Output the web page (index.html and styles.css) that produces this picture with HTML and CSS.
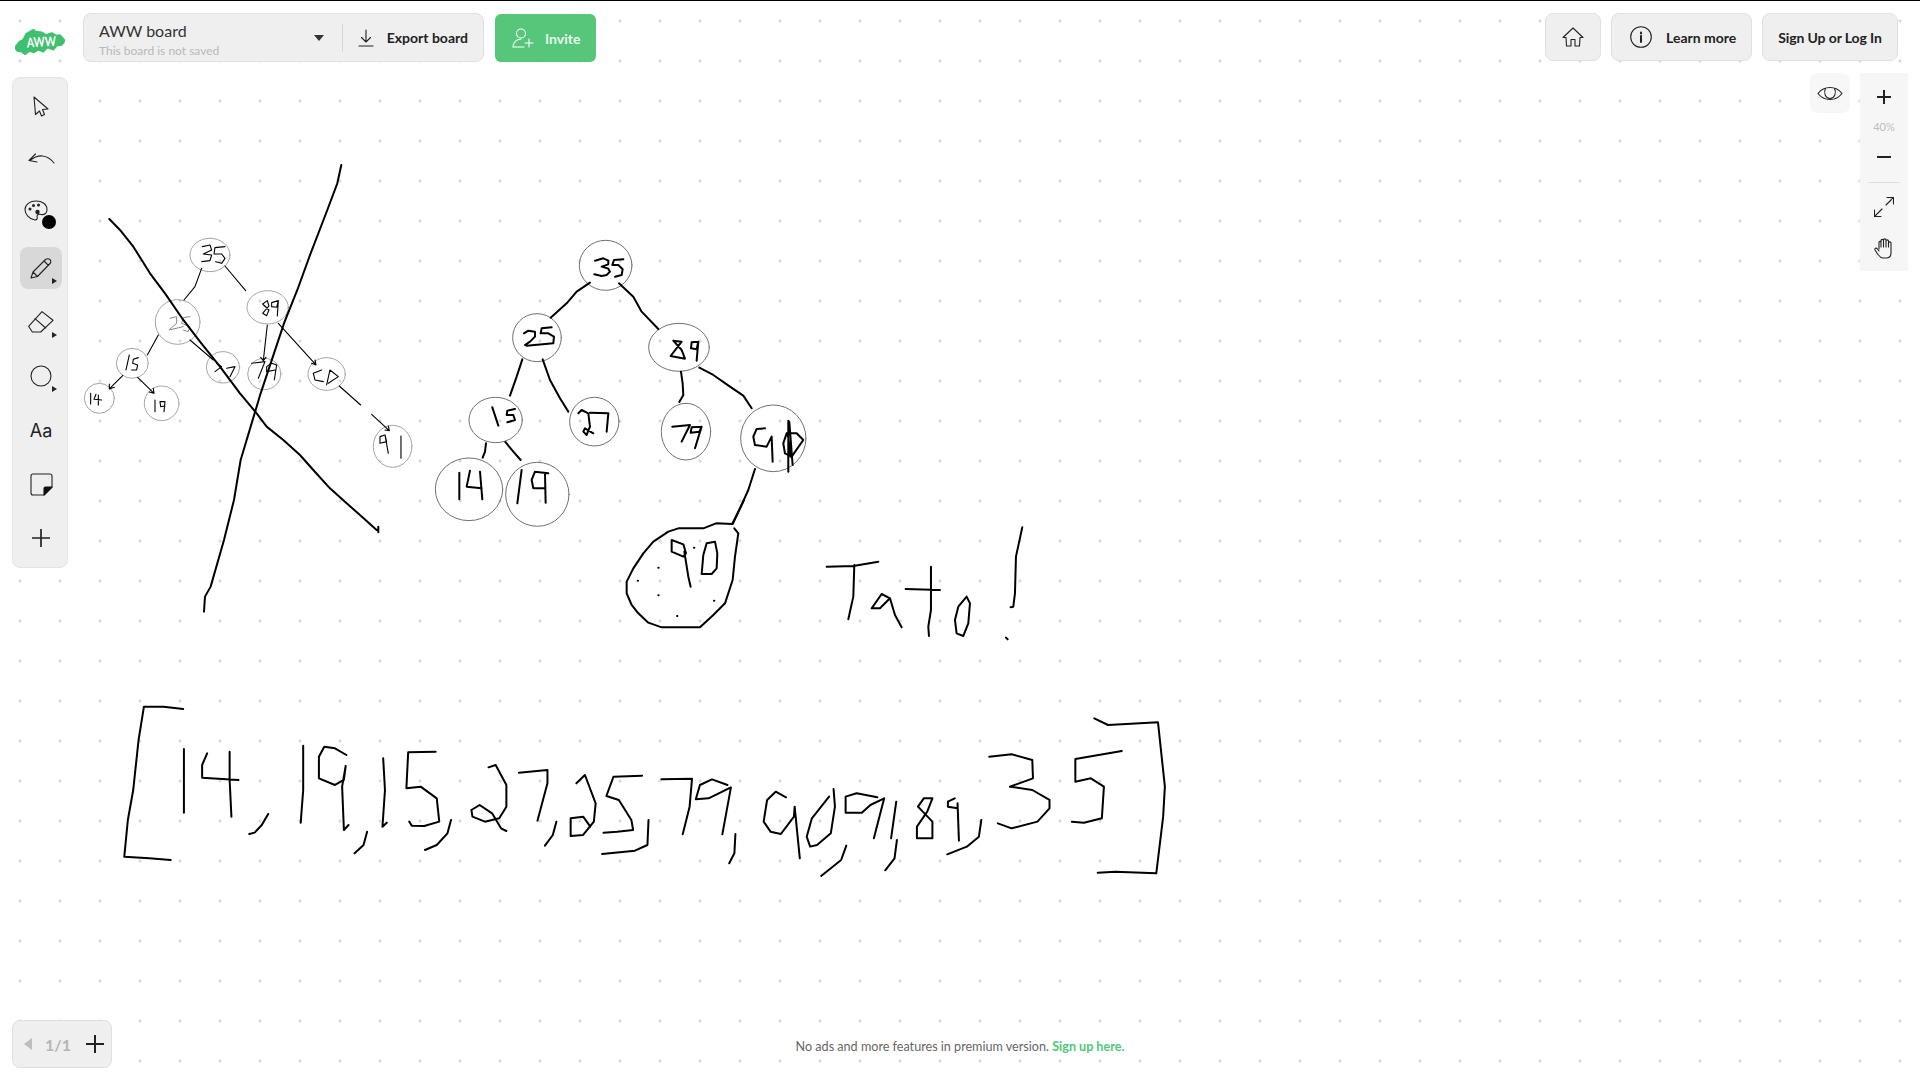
FILE: index.html
```html
<!DOCTYPE html>
<html lang="en">
<head>
    <meta charset="UTF-8">
    <meta name="viewport" content="width=device-width, initial-scale=1.0">
    <title>AWW board</title>
    <link rel="stylesheet" href="styles.css">
</head>
<body>
    <div class="board">
        <!-- Free canvas: everything the user drew -->
        <svg class="ink" viewBox="0 0 1920 1080" width="1920" height="1080">
            <!-- small tree -->
            <g transform="translate(70 150) scale(.3333)">
                <g class="ring-light">
                    <ellipse cx="420" cy="315" rx="60" ry="50"/>
                    <ellipse cx="323" cy="516" rx="67" ry="67"/>
                    <ellipse cx="593" cy="472" rx="62" ry="50"/>
                    <ellipse cx="187" cy="640" rx="48" ry="45"/>
                    <ellipse cx="459" cy="652" rx="50" ry="47"/>
                    <ellipse cx="583" cy="672" rx="50" ry="47"/>
                    <ellipse cx="770" cy="672" rx="56" ry="49"/>
                    <ellipse cx="88" cy="745" rx="45" ry="45"/>
                    <ellipse cx="275" cy="760" rx="52" ry="52"/>
                    <ellipse cx="968" cy="889" rx="58" ry="63"/>
                </g>
                <g class="pen-thin">
                    <path d="M395 355L375 410L342 450M465 348L527 422M265 555L232 615"/>
                    <path d="M158 677L118 717M118 702L118 717L133 712M203 682L252 730M238 726L252 730L250 715"/>
                    <path d="M360 570L430 630M592 525L580 632M572 622L580 632L588 622M625 520L738 645M725 640L738 645L735 630"/>
                    <path d="M808 708L872 765M905 793L958 842M945 840L958 842L955 828"/>
                    <path d="M397 290L420 285L425 300L400 312L425 315L420 332L395 335M465 290L435 293L432 312L455 312L465 325L455 340L437 335"/>
                    <path d="M578 462L592 452L597 468L578 490L590 497L597 480L578 462M625 452L605 458L605 470L620 472L625 452L622 498"/>
                    <path d="M178 615L168 660M205 623L190 628L188 640L203 645L200 660L185 660"/>
                    <path d="M62 730L62 762M78 733L72 748L95 750M85 735L85 765"/>
                    <path d="M255 750L255 785M285 755L270 755L272 770L285 768M285 755L282 785"/>
                    <path d="M440 640L455 650L435 665M470 655L495 650L480 680"/>
                    <path d="M545 640L585 635L565 685M620 645L605 640L590 650L590 665L615 660M620 645L613 690"/>
                    <path d="M755 660L730 670L735 690L760 695M770 705L780 660L805 680L775 700"/>
                    <path d="M945 855L930 860L930 880L950 875L945 855L955 910M993 858L993 925"/>
                </g>
                <path class="pen-faded" d="M300 505L320 500L320 520L297 540L340 530M360 500L340 503L335 520L360 530L355 545L340 540"/>
                <g class="pen-bold">
                    <path d="M118 207L150 240L190 290L240 370L285 430L340 510L390 575L450 650L510 730L560 790L590 830L640 870L690 915L730 960L780 1015L830 1060L870 1095L920 1140M925 1130L925 1147"/>
                    <path d="M814 45L802 100L772 180L722 310L682 420L642 520L612 610L572 730L542 830L512 930L492 1050L462 1170L422 1310L405 1340L402 1385"/>
                </g>
            </g>
            <!-- big tree -->
            <g transform="translate(420 230) scale(.3333)">
                <g class="ring-dark">
                    <ellipse cx="557" cy="106" rx="79" ry="75"/>
                    <ellipse cx="351" cy="323" rx="73" ry="72"/>
                    <ellipse cx="777" cy="352" rx="91" ry="72"/>
                    <ellipse cx="227" cy="570" rx="80" ry="68"/>
                    <ellipse cx="523" cy="575" rx="74" ry="73"/>
                    <ellipse cx="798" cy="605" rx="74" ry="85"/>
                    <ellipse cx="1060" cy="625" rx="98" ry="100"/>
                    <ellipse cx="147" cy="778" rx="101" ry="94"/>
                    <ellipse cx="352" cy="793" rx="95" ry="96"/>
                </g>
                <g class="pen">
                    <path d="M510 158L470 185L440 220L392 263M597 160L640 200L665 245L715 297M307 388L290 440L270 497M368 388L390 450L420 505L445 545"/>
                    <path d="M783 425L788 460L790 495L778 516M838 413L880 435L930 470L970 497L995 535M198 640L195 665L188 683M256 636L280 665L302 690"/>
                    <path d="M1005 717L985 780L960 835L938 880"/>
                    <path d="M525 92L550 85L565 92L565 103L545 110L565 116L570 125L560 135L545 138L523 133M610 88L582 90L577 105L595 105L608 118L605 135L585 140"/>
                    <path d="M312 310L325 302L345 305L345 320L330 335L315 345L320 347L400 340M395 292L365 295L362 310L385 310L402 320L400 340"/>
                    <path d="M760 332L785 335L752 378L795 386L785 360L760 332M835 335L815 337L813 355L830 358L835 335L830 392"/>
                    <path d="M217 532L235 587M285 537L262 542L260 555L280 555L285 570L262 577"/>
                    <path d="M475 550L485 540L505 550L510 590L500 615L490 605L495 595L520 610M510 548L565 550L560 605"/>
                    <path d="M757 590L810 585L785 635M845 590L815 592L812 608L838 605L845 590L825 655"/>
                    <path d="M1035 595L1010 597L1000 620L1005 645L1040 650L1055 620L1058 695M1100 610L1130 610L1150 630L1115 680L1095 670L1090 640L1100 610"/>
                    <path d="M1105 572L1105 725M1108 575L1118 705M1103 610L1112 680"/>
                    <path d="M118 728L118 808M150 722L140 770L185 775M180 725L187 808M305 720L292 820M385 730L345 725L335 750L340 775L375 775M375 730L377 818"/>
                </g>
            </g>
            <!-- highlighted 90 and the word next to it -->
            <g class="pen" transform="translate(600 500) scale(.3333)">
                <path d="M432 0L398 72L348 70L310 85L235 85L205 95L160 125L130 160L100 205L80 245L80 280L95 315L115 340L145 368L185 382L300 382L340 345L375 310L398 240L405 170L415 100L403 85"/>
                <path d="M215 120L250 133L258 160L250 170L215 155L215 120M253 155L265 230L272 260M310 165L320 130L345 125L352 160L350 205L335 222L305 222L310 165"/>
                <path class="speck" d="M282 143h1M175 203h1M113 242h1M175 286h1M342 302h1M231 348h1"/>
                <path d="M680 200L760 198L835 185M763 195L760 290L745 358M870 295L845 282L815 325L840 325L870 295L885 345L905 382"/>
                <path d="M917 267L1020 270M993 200L993 330L985 380L987 408M1100 290L1075 320L1065 360L1070 400L1090 408L1105 370L1110 310L1100 290"/>
                <path d="M1267 82L1248 170L1245 280L1240 320L1232 322M1218 413L1223 418"/>
            </g>
            <!-- the array, left half -->
            <g class="pen" transform="translate(110 690) scale(.3571 .3333)">
                <path d="M205 57L150 50L95 50L80 150L65 300L50 390L40 500L110 505L170 510"/>
                <path d="M207 177L207 368M272 190L258 225L258 263L360 270M335 185L335 270L340 380M443 372L425 405L405 428L390 432"/>
                <path d="M541 167L541 300L534 398M662 195L630 175L600 170L585 200L585 265L630 285L655 270L660 228L650 290L655 420L668 405M720 425L710 465L685 490"/>
                <path d="M765 205L770 300L763 410L775 398M912 185L835 187L830 295L870 290L915 325L922 395L880 408L845 407L838 395M955 390L945 430L915 465L882 480"/>
                <path d="M1060 232L1080 225L1110 285L1110 350L1090 385L1050 395L1015 380L1012 360L1035 345L1070 370L1095 415L1110 423M1145 248L1225 240L1225 280L1197 392M1250 395L1240 435L1218 467"/>
                <path d="M1306 280L1330 255L1360 340L1355 395L1325 435L1290 438L1290 385L1325 380L1345 410M1490 257L1410 260L1390 318L1425 330L1460 390L1465 420L1420 425L1382 428M1508 390L1505 465L1470 482L1378 492"/>
            </g>
            <!-- the array, right half -->
            <g class="pen" transform="translate(650 690) scale(.3444 .3333)">
                <path d="M33 268L122 266L115 350L95 433M225 285L180 268L145 285L133 328L170 325L235 292L210 433M248 432L245 490L230 520"/>
                <path d="M395 322L365 305L340 330L330 395L350 425L380 432L418 380L420 350L435 505M520 320L470 385L455 440L465 470L485 465L525 430L537 350L533 297M570 467L555 510L497 558"/>
                <path d="M660 322L600 310L568 320L568 368L615 368L640 345L680 325L650 445M715 335L700 445M717 450L710 505L683 541"/>
                <path d="M820 325L795 325L778 350L820 395L820 445L775 445L775 410L805 365L820 325M885 325L865 335L865 350L893 355L893 340L897 452M962 390L955 440L920 470L863 493"/>
                <path d="M985 200L1050 193L1110 210L1112 265L1045 290L1110 300L1160 330L1160 355L1125 395L1050 415L1010 400M1370 183L1235 207L1235 275L1280 265L1318 290L1312 385L1260 398L1225 395"/>
                <path d="M1290 85L1330 105L1475 97L1495 290L1490 380L1470 550L1350 545L1300 548"/>
            </g>
        </svg>

        <header class="top-bar">
            <div class="top-left">
                <svg class="logo" viewBox="15 24 150 84" width="50" height="28">
                    <path class="logo-blob" d="M15 85L28 68L40 62L48 45L70 32L78 38L95 40L108 48L125 42L140 50L150 48L165 65L155 78L140 80L130 92L112 85L100 98L85 92L72 100L58 96L45 106L35 98L22 96Z"/>
                    <text class="logo-text" x="50" y="83" textLength="88" lengthAdjust="spacingAndGlyphs" transform="rotate(-3 94 70)">AWW</text>
                </svg>
                <div class="board-panel">
                    <div class="board-name">
                        <div class="board-title">AWW board</div>
                        <div class="board-note">This board is not saved</div>
                    </div>
                    <span class="caret"></span>
                    <div class="export-btn">
                        <svg class="ico" viewBox="0 0 16 18" width="16" height="18"><path d="M8 1V13M3.500 8.500L8 13L12.500 8.500M1 17H15"/></svg>
                        <span>Export board</span>
                    </div>
                </div>
                <div class="invite-btn">
                    <svg class="ico ico-white" viewBox="0 0 22 20" width="22" height="20"><circle cx="9" cy="5.500" r="4.500"/><path d="M1 19C1.500 14 4 11.500 9 11M1 19H12M17 11V19M13 15H21"/></svg>
                    <span>Invite</span>
                </div>
            </div>
            <div class="top-right">
                <div class="top-btn home-btn">
                    <svg class="ico" viewBox="0 0 22 20" width="22" height="20"><path d="M11 1L21 10.500L18 10.500L17.500 19H13V12.500H9V19H4.500L4 10.500L1 10.500Z"/></svg>
                </div>
                <div class="top-btn learn-btn">
                    <svg class="ico" viewBox="0 0 22 22" width="22" height="22"><circle cx="11" cy="11" r="10.300"/><path class="ico-fat" d="M11 10V16M11 6.500V7.500"/></svg>
                    <span>Learn more</span>
                </div>
                <div class="top-btn sign-btn">Sign Up or Log In</div>
            </div>
        </header>

        <nav class="tools">
            <div class="tool">
                <svg class="ico" viewBox="0 0 16 21" width="16" height="21"><path d="M1 1L15 13L9.500 13.500L11.500 18.500L8.500 20L6.500 15L2.500 18.500Z"/></svg>
            </div>
            <div class="tool tool-undo">
                <svg class="ico" viewBox="0 0 28 11" width="28" height="11"><path d="M27 10C20 1 11 1 3 7.500M8.500 1L2 7.500L10 9"/></svg>
            </div>
            <div class="tool">
                <svg class="ico palette" viewBox="0 0 24 21" width="24" height="21"><path d="M12 1C6 1 1 4.500 1 9.500C1 14 5 19 11 20C13.500 20 13.500 18 13 16.500C13 14 15 14 17 14.500C21 15 23 13 23 9.500C23 4 18 1 12 1Z"/><circle class="ico-fill" cx="6" cy="9" r="1.500"/><circle class="ico-fill" cx="9.500" cy="5.500" r="1.500"/><circle class="ico-fill" cx="14.500" cy="5" r="1.500"/><circle class="ico-fill" cx="13.500" cy="12" r="2.200"/></svg>
                <span class="color-dot"></span>
            </div>
            <div class="tool active">
                <svg class="ico" viewBox="0 0 22 21" width="22" height="21"><path d="M1 20L3 14L15.500 1.500C17 0.500 18.500 0.500 20 1.500C21 3 21 4.500 20 5.500L7.500 18.500ZM3 14L7.500 18.500M14 3L18.500 7.500"/></svg>
                <span class="more"></span>
            </div>
            <div class="tool">
                <svg class="ico" viewBox="0 0 26 22" width="26" height="22"><path d="M14 0.600L25 9.300L12.700 21L4.300 21L0.600 15.300ZM7 7.700L17.700 17"/></svg>
                <span class="more"></span>
            </div>
            <div class="tool">
                <svg class="ico" viewBox="0 0 22 22" width="22" height="22"><circle cx="11" cy="11" r="10"/></svg>
                <span class="more"></span>
            </div>
            <div class="tool tool-text">Aa</div>
            <div class="tool">
                <svg class="ico" viewBox="0 0 23 23" width="23" height="23"><path d="M3 1H20C21.500 1 22 1.500 22 3V14L14 22H3C1.500 22 1 21.500 1 20V3C1 1.500 1.500 1 3 1Z"/><path class="ico-solid" d="M14 22V15.500C14 14.500 14.500 14 15.500 14H22Z"/></svg>
            </div>
            <div class="tool">
                <svg class="ico ico-plus" viewBox="0 0 18 18" width="18" height="18"><path d="M9 0V18M0 9H18"/></svg>
            </div>
        </nav>

        <div class="view-eye">
            <svg class="ico" viewBox="0 0 26 15" width="26" height="15"><path d="M1 7.500C7 -0.500 19 -0.500 25 7.500C19 15.500 7 15.500 1 7.500Z"/><path d="M8.500 2.500C6.500 6 8 12.500 13 12.500C18 12.500 19.500 6 17.500 2.500"/></svg>
        </div>

        <aside class="view-tools">
            <svg class="ico ico-fat" viewBox="0 0 14 14" width="14" height="14"><path d="M7 0V14M0 7H14"/></svg>
            <div class="zoom-value">40%</div>
            <svg class="ico ico-fat minus" viewBox="0 0 14 2" width="14" height="2"><path d="M0 1H14"/></svg>
            <div class="view-divider"></div>
            <svg class="ico expand" viewBox="0 0 20 20" width="20" height="20"><path d="M12 8L19.500 0.500M13 0.500H19.500V7M8 12L0.500 19.500M0.500 13V19.500H7"/></svg>
            <svg class="ico hand" viewBox="0 0 20 21" width="20" height="21"><path d="M5 11V4.500C5 3 7 3 7 4.500V9M7 9V2.500C7 1 9.500 1 9.500 2.500V9M9.500 9V2C9.500 0.500 12 0.500 12 2V9M12 9V3C12 1.500 14.500 1.500 14.500 3V9M14.500 9V5C14.500 3.500 17 3.500 17 5V15C17 18 15 20 12 20H9C6.500 20 5.500 18.500 4 16.500L1 12C0.500 10.500 2 9.500 3 10.500L5 13"/></svg>
        </aside>

        <div class="pager">
            <span class="pager-prev"></span>
            <span class="pager-count">1/1</span>
            <svg class="ico ico-fat" viewBox="0 0 18 18" width="18" height="18"><path d="M9 0V18M0 9H18"/></svg>
        </div>

        <p class="promo">No ads and more features in premium version. <a href="#">Sign up here.</a></p>
    </div>
</body>
</html>
```

FILE: styles.css
```css
* {
    margin: 0;
    padding: 0;
    box-sizing: border-box;
    font-family: 'Lato', sans-serif;
}

body {
    background-color: #fff;
    color: #222;
    overflow: hidden;
}

.board {
    position: relative;
    width: 1920px;
    height: 1080px;
    background-image: radial-gradient(circle, #dadada 1.2px, transparent 1.9px);
    background-size: 40px 40px;
    background-position: 0 1px;
}

/* thin black line along the top of the window */
.board::before {
    content: '';
    position: absolute;
    top: 0;
    left: 0;
    right: 0;
    height: 1px;
    background: #000;
}

.ink {
    position: absolute;
    top: 0;
    left: 0;
}

.ink path,
.ink ellipse {
    fill: none;
    stroke-linecap: round;
    stroke-linejoin: round;
    vector-effect: non-scaling-stroke;
}

.ring-light ellipse {
    stroke: #9a9a9a;
    stroke-width: 0.9;
}

.ring-dark ellipse {
    stroke: #707070;
    stroke-width: 1;
}

.pen-thin path {
    stroke: #000;
    stroke-width: 1.1;
}

.ink .pen-faded {
    stroke: #888;
    stroke-width: 1;
}

.pen-bold path {
    stroke: #000;
    stroke-width: 2;
}

.pen path {
    stroke: #000;
    stroke-width: 2;
}

/* top bar */
.top-bar {
    position: absolute;
    top: 13px;
    left: 15px;
    right: 22px;
    display: flex;
    justify-content: space-between;
    align-items: flex-start;
}

.top-left {
    display: flex;
    align-items: flex-start;
}

.top-right {
    display: flex;
    gap: 10px;
}

.logo {
    margin-top: 14px;
    margin-right: 18px;
}

.logo-blob {
    fill: #3fc06e;
    stroke: #3fc06e;
    stroke-width: 5;
    stroke-linejoin: round;
}

.logo-text {
    fill: #fff;
    font-size: 40px;
    font-weight: 700;
}

.board-panel {
    display: flex;
    align-items: center;
    width: 401px;
    height: 49px;
    background: #efefef;
    border: 1px solid #e0e0e0;
    border-radius: 8px;
}

.board-name {
    flex: 1;
    align-self: stretch;
    padding: 7px 0 0 15px;
}

.board-title {
    font-size: 16px;
    line-height: 19px;
    color: #333;
}

.board-note {
    margin-top: 3px;
    font-size: 12px;
    line-height: 15px;
    color: #b8b8b8;
}

.caret {
    width: 0;
    height: 0;
    margin-right: 18px;
    border-left: 5px solid transparent;
    border-right: 5px solid transparent;
    border-top: 6px solid #333;
}

.export-btn {
    display: flex;
    align-items: center;
    gap: 13px;
    height: 28px;
    padding: 0 15px;
    border-left: 1px solid #d8d8d8;
    font-size: 14px;
    font-weight: 700;
    color: #222;
}

.invite-btn {
    display: flex;
    align-items: center;
    gap: 11px;
    width: 101px;
    height: 48px;
    margin-top: 1px;
    margin-left: 11px;
    padding-left: 17px;
    background: #55c67a;
    border-radius: 6px;
    font-size: 14px;
    font-weight: 700;
    color: #eafaf0;
}

.top-btn {
    display: flex;
    align-items: center;
    justify-content: center;
    height: 48px;
    background: #efefef;
    border: 1px solid #e0e0e0;
    border-radius: 8px;
    font-size: 14px;
    font-weight: 700;
    color: #222;
}

.home-btn {
    width: 56px;
}

.learn-btn {
    justify-content: flex-start;
    width: 141px;
    gap: 14px;
    padding-left: 18px;
}

.sign-btn {
    width: 136px;
    letter-spacing: -0.1px;
}

/* icons */
.ico {
    fill: none;
    stroke: #222;
    stroke-width: 1.1;
    stroke-linecap: round;
    stroke-linejoin: round;
    flex-shrink: 0;
}

.ico-white {
    stroke: #fff;
}

.ico-fat {
    stroke-width: 2;
    stroke: #222;
}

.ico-plus {
    stroke-width: 1.7;
}

.ico .ico-fill {
    fill: #222;
    stroke: none;
}

.ico .ico-solid {
    fill: #111;
    stroke: #111;
}

/* left tool column */
.tools {
    position: absolute;
    top: 77px;
    left: 12px;
    display: flex;
    flex-direction: column;
    gap: 12px;
    width: 56px;
    height: 491px;
    padding: 7px 0 7px 7px;
    background: #efefef;
    border: 1px solid #e4e4e4;
    border-radius: 8px;
}

.tool {
    position: relative;
    display: flex;
    align-items: center;
    justify-content: center;
    width: 42px;
    height: 42px;
    border-radius: 8px;
    flex-shrink: 0;
}

.tool.active {
    background: #d8d8d8;
}

.tool-undo {
    padding-bottom: 3px;
}

.tool-text {
    font-family: 'Inter', sans-serif;
    font-size: 18px;
    color: #222;
}

.palette {
    margin: 0 11px 8px 0;
}

.color-dot {
    position: absolute;
    left: 22px;
    bottom: 6px;
    width: 14px;
    height: 14px;
    background: #000;
    border-radius: 50%;
}

.more {
    position: absolute;
    right: 5px;
    bottom: 5px;
    width: 0;
    height: 0;
    border-top: 3px solid transparent;
    border-bottom: 3px solid transparent;
    border-left: 5px solid #222;
}

/* right view controls */
.view-eye {
    position: absolute;
    top: 73px;
    left: 1810px;
    display: flex;
    align-items: center;
    justify-content: center;
    width: 40px;
    height: 40px;
    background: #f7f7f7;
    border-radius: 8px;
}

.view-tools {
    position: absolute;
    top: 73px;
    left: 1860px;
    display: flex;
    flex-direction: column;
    align-items: center;
    width: 48px;
    height: 198px;
    padding-top: 17px;
    background: #f6f6f6;
}

.zoom-value {
    margin-top: 17px;
    font-size: 11px;
    line-height: 12px;
    color: #bdbdbd;
}

.minus {
    margin-top: 23px;
}

.view-divider {
    width: 32px;
    height: 1px;
    margin-top: 24px;
    background: #dedede;
}

.expand {
    margin-top: 14px;
}

.hand {
    margin-top: 21px;
}

/* page switcher */
.pager {
    position: absolute;
    top: 1020px;
    left: 12px;
    display: flex;
    align-items: center;
    width: 100px;
    height: 48px;
    padding-left: 11px;
    background: #efefef;
    border: 1px solid #e0e0e0;
    border-radius: 8px;
}

.pager-prev {
    width: 0;
    height: 0;
    border-top: 6px solid transparent;
    border-bottom: 6px solid transparent;
    border-right: 8px solid #bdbdbd;
}

.pager-count {
    margin-left: 13px;
    margin-right: 15px;
    font-size: 16px;
    font-weight: 700;
    color: #b5b5b5;
}

/* promo line at the bottom */
.promo {
    position: absolute;
    top: 1039px;
    left: 0;
    width: 1920px;
    text-align: center;
    font-size: 12.6px;
    line-height: 16px;
    color: #666;
}

.promo a {
    color: #4fc877;
    font-weight: 700;
    text-decoration: none;
}
```
